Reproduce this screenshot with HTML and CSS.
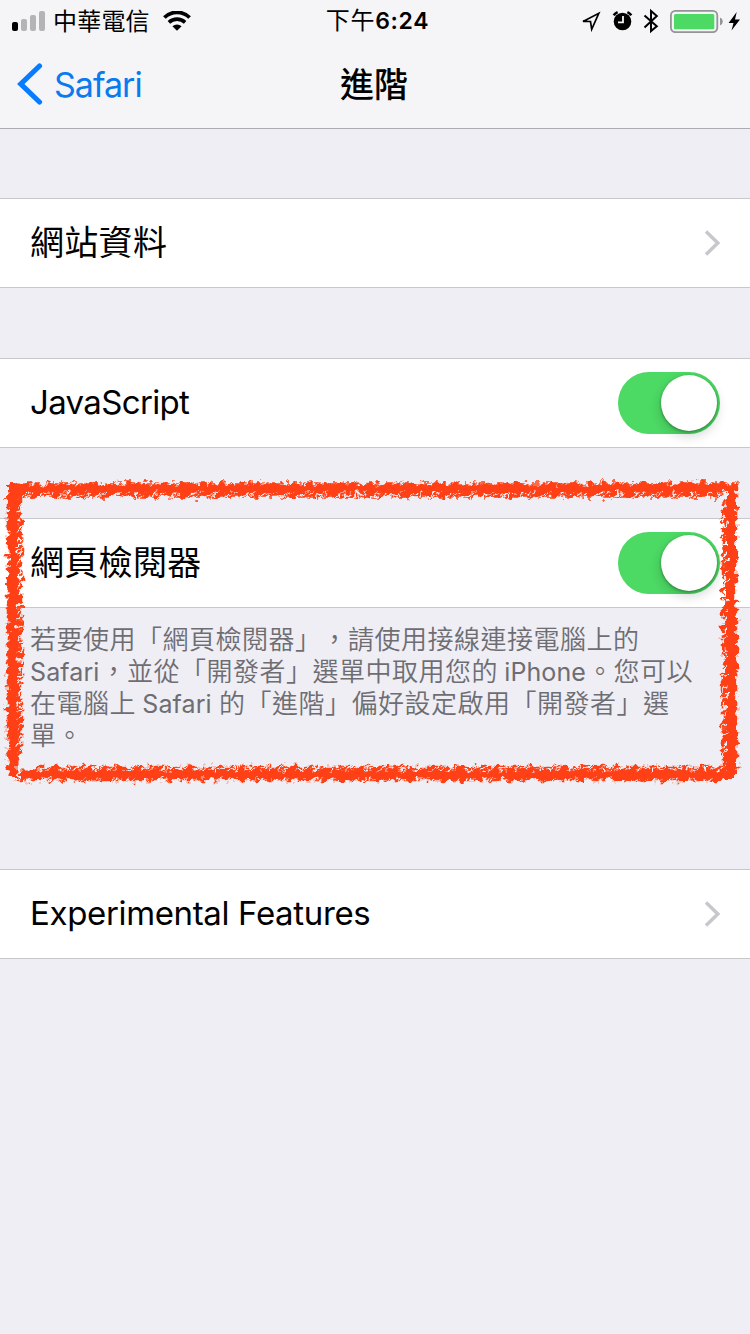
FILE: index.html
```html
<!DOCTYPE html>
<html lang="zh-TW">
<head>
<meta charset="utf-8">
<title>進階</title>
<link rel="stylesheet" href="styles.css">
</head>
<body>
<header class="top">
  <div class="status">
    <div class="status-left">
      <svg class="signal" width="34" height="22" viewBox="0 0 34 22"><rect x="0" y="12" width="6" height="9" rx="2"/><g fill="#b4b4b6"><rect x="9" y="9" width="6" height="12" rx="2"/><rect x="18" y="5" width="6" height="16" rx="2"/><rect x="27" y="1" width="6" height="20" rx="2"/></g></svg>
      <span class="carrier">中華電信</span>
      <svg class="wifi" width="28" height="20" viewBox="0 0 28 20"><path d="M1.4 6.5a18 18 0 0 1 25.200 0" fill="none" stroke="#000" stroke-width="3.800"/><path d="M5.900 11.300a12 12 0 0 1 16.200 0" fill="none" stroke="#000" stroke-width="3.600"/><path d="M9.400 15.200a7 7 0 0 1 9.200 0L14 19.800z"/></svg>
    </div>
    <div class="time"><span class="ampm">下午</span>6:24</div>
    <div class="status-right">
      <svg width="160" height="28" viewBox="580 6 160 28">
        <path d="M583 20.400 598.800 12.300 591.700 28.300 590.500 20.500z" fill="none" stroke="#000" stroke-width="1.700"/>
        <circle cx="622.500" cy="20.500" r="8.800"/>
        <path d="M613.600 14.200a12 12 0 0 1 4-3M631.400 14.200a12 12 0 0 0-4-3" fill="none" stroke="#000" stroke-width="2.500"/>
        <path d="M623 15v6.300h-5" fill="none" stroke="#f5f5f7" stroke-width="1.800"/>
        <path d="M644.500 14.400 656.800 25.200 651 30V10l5.800 5L644.500 26.500" fill="none" stroke="#000" stroke-width="2"/>
        <rect x="670.900" y="9.900" width="46.400" height="21.200" rx="4.500" fill="none" stroke="#949497" stroke-width="1.800"/>
        <rect x="674" y="13" width="40.300" height="15.200" rx="1.500" fill="#4cd964"/>
        <path d="M720 16.500q2.800 1.200 2.800 4t-2.800 4z" fill="#949497"/>
        <path d="M736.700 11 728.600 21.900h4.900L731.500 29.600 740 18.600h-5z"/>
      </svg>
    </div>
  </div>
  <nav class="nav">
    <div class="back"><svg width="27" height="44" viewBox="0 0 27 44"><path d="M23.500 4 4.800 22 23.500 40" fill="none" stroke="#087cff" stroke-width="5.200" stroke-linecap="round"/></svg><span class="back-label">Safari</span></div>
    <h1 class="title">進階</h1>
  </nav>
</header>
<main class="list">
  <div class="row">
    <span class="cjk">網站資料</span>
    <svg class="chevron" width="17" height="28" viewBox="0 0 17 28"><path d="M2 2.500 13.800 14 2 25.500" fill="none" stroke="#c7c7cc" stroke-width="3.500"/></svg>
  </div>
  <div class="row">
    <span class="latin js">JavaScript</span>
    <span class="switch"><span class="knob"></span></span>
  </div>
  <section class="inspector">
    <div class="row">
      <span class="cjk">網頁檢閱器</span>
      <span class="switch"><span class="knob"></span></span>
    </div>
    <p class="note"><span class="line">若要使用「網頁檢閱器」，請使用接線連接電腦上的</span><span class="line"><span class="lat">Safari</span>，並從「開發者」選單中取用您的 <span class="lat">iPhone</span>。您可以</span><span class="line">在電腦上 <span class="lat">Safari</span> 的「進階」偏好設定啟用「開發者」選</span><span class="line">單。</span></p>
    <svg class="marker" width="750" height="335" viewBox="0 0 750 335">
      <defs>
        <filter id="chalk" filterUnits="userSpaceOnUse" x="0" y="0" width="750" height="335">
          <feTurbulence type="fractalNoise" baseFrequency="0.15 0.17" numOctaves="2" seed="8" result="n"/>
          <feDisplacementMap in="SourceGraphic" in2="n" scale="11" xChannelSelector="R" yChannelSelector="G"/>
        </filter>
      </defs>
      <g fill="none" stroke="#ff4013" filter="url(#chalk)">
        <path d="M8 29.500H737M20 315.500H737" stroke-width="8"/>
        <path d="M13 24V318M731.500 26V321" stroke-width="9"/>
        <g stroke-width="15.500">
          <path d="M0 0H713" transform="translate(15 31) skewX(-58)" stroke-dasharray="5 2 8 3 3 2 11 3"/>
          <path d="M0 0H704" transform="translate(26 314.500) skewX(-58)" stroke-dasharray="7 3 4 2 10 3 3 2"/>
          <path d="M0 0V272" transform="translate(14.500 34) skewY(-50)" stroke-dasharray="6 3 9 2 3 3 5 2"/>
          <path d="M0 0V272" transform="translate(729.500 36) skewY(-50)" stroke-dasharray="4 3 8 3 5 2 11 2"/>
        </g>
      </g>
    </svg>
  </section>
  <div class="row last">
    <span class="latin exp">Experimental Features</span>
    <svg class="chevron" width="17" height="28" viewBox="0 0 17 28"><path d="M2 2.500 13.800 14 2 25.500" fill="none" stroke="#c7c7cc" stroke-width="3.500"/></svg>
  </div>
</main>
</body>
</html>
```

FILE: styles.css
```css
* { box-sizing: border-box; }
body {
  margin: 0;
  height: 1334px;
  overflow: hidden;
  background: #efeef5;
  color: #000;
  font-family: Inter, "Noto Sans CJK TC", sans-serif;
  text-spacing-trim: space-all;
}
svg { display: block; flex: none; }
.top { height: 129px; background: #f5f5f7; border-bottom: 1px solid #acabb3; }
.status {
  display: grid;
  grid-template-columns: 1fr auto 1fr;
  height: 40px;
  padding: 0 10px 0 12px;
  align-items: center;
}
.status-left { display: flex; align-items: center; }
.carrier {
  margin-left: 7px;
  font: 24px/36px "Noto Sans CJK TC", sans-serif;
  letter-spacing: 0.2px;
  padding-bottom: 2px;
}
.wifi { margin-left: 13px; }
.time { padding: 0 0 2px 3px; font-size: 23px; line-height: 38px; font-weight: 600; letter-spacing: 0.7px; }
.ampm { font: 24px/38px "Noto Sans CJK TC", sans-serif; }
.status-right { display: flex; justify-content: flex-end; }
.nav {
  display: grid;
  grid-template-columns: 1fr auto 1fr;
  height: 88px;
  align-items: center;
}
.back { display: flex; align-items: center; padding-left: 16px; color: #0a7aef; }
.back-label { margin-left: 11px; font-size: 34px; letter-spacing: -1px; }
.title { margin: 0 2px 3px 0; font: 500 34px/85px "Noto Sans CJK TC", sans-serif; }
.list { display: flex; flex-direction: column; gap: 70px; padding-top: 69px; }
.row {
  display: flex;
  align-items: center;
  justify-content: space-between;
  height: 90px;
  padding: 0 30px;
  background: #fff;
  border-top: 1px solid #c8c7cc;
  border-bottom: 1px solid #c8c7cc;
}
.cjk { padding-bottom: 4px; font: 34px/84px "Noto Sans CJK TC", sans-serif; letter-spacing: 0.3px; }
.latin { padding-bottom: 2px; font-size: 33px; }
.js { letter-spacing: -0.65px; }
.exp { letter-spacing: -0.35px; }
.switch {
  display: flex;
  justify-content: flex-end;
  width: 102px;
  height: 62px;
  padding: 3px;
  border-radius: 31px;
  background: #4cd964;
}
.knob {
  width: 56px;
  height: 56px;
  border-radius: 50%;
  background: #fff;
  box-shadow: 0 5px 12px rgba(0, 0, 0, 0.18), 0 1px 3px rgba(0, 0, 0, 0.35);
}
.chevron { margin-right: -1px; }
.inspector { position: relative; height: 281px; }
.note { margin: 0; padding: 14px 30px 0; color: #6d6d72; font-size: 26px; }
.line {
  display: block;
  height: 32px;
  font: 26px/32px "Noto Sans CJK TC", sans-serif;
  font-weight: 350;
  letter-spacing: 0.5px;
  white-space: nowrap;
}
.lat { margin-right: 1px; font-family: Inter, sans-serif; font-size: 25px; font-weight: 400; letter-spacing: 0.1px; }
.marker { position: absolute; top: -59px; left: 0; overflow: hidden; pointer-events: none; }
```
